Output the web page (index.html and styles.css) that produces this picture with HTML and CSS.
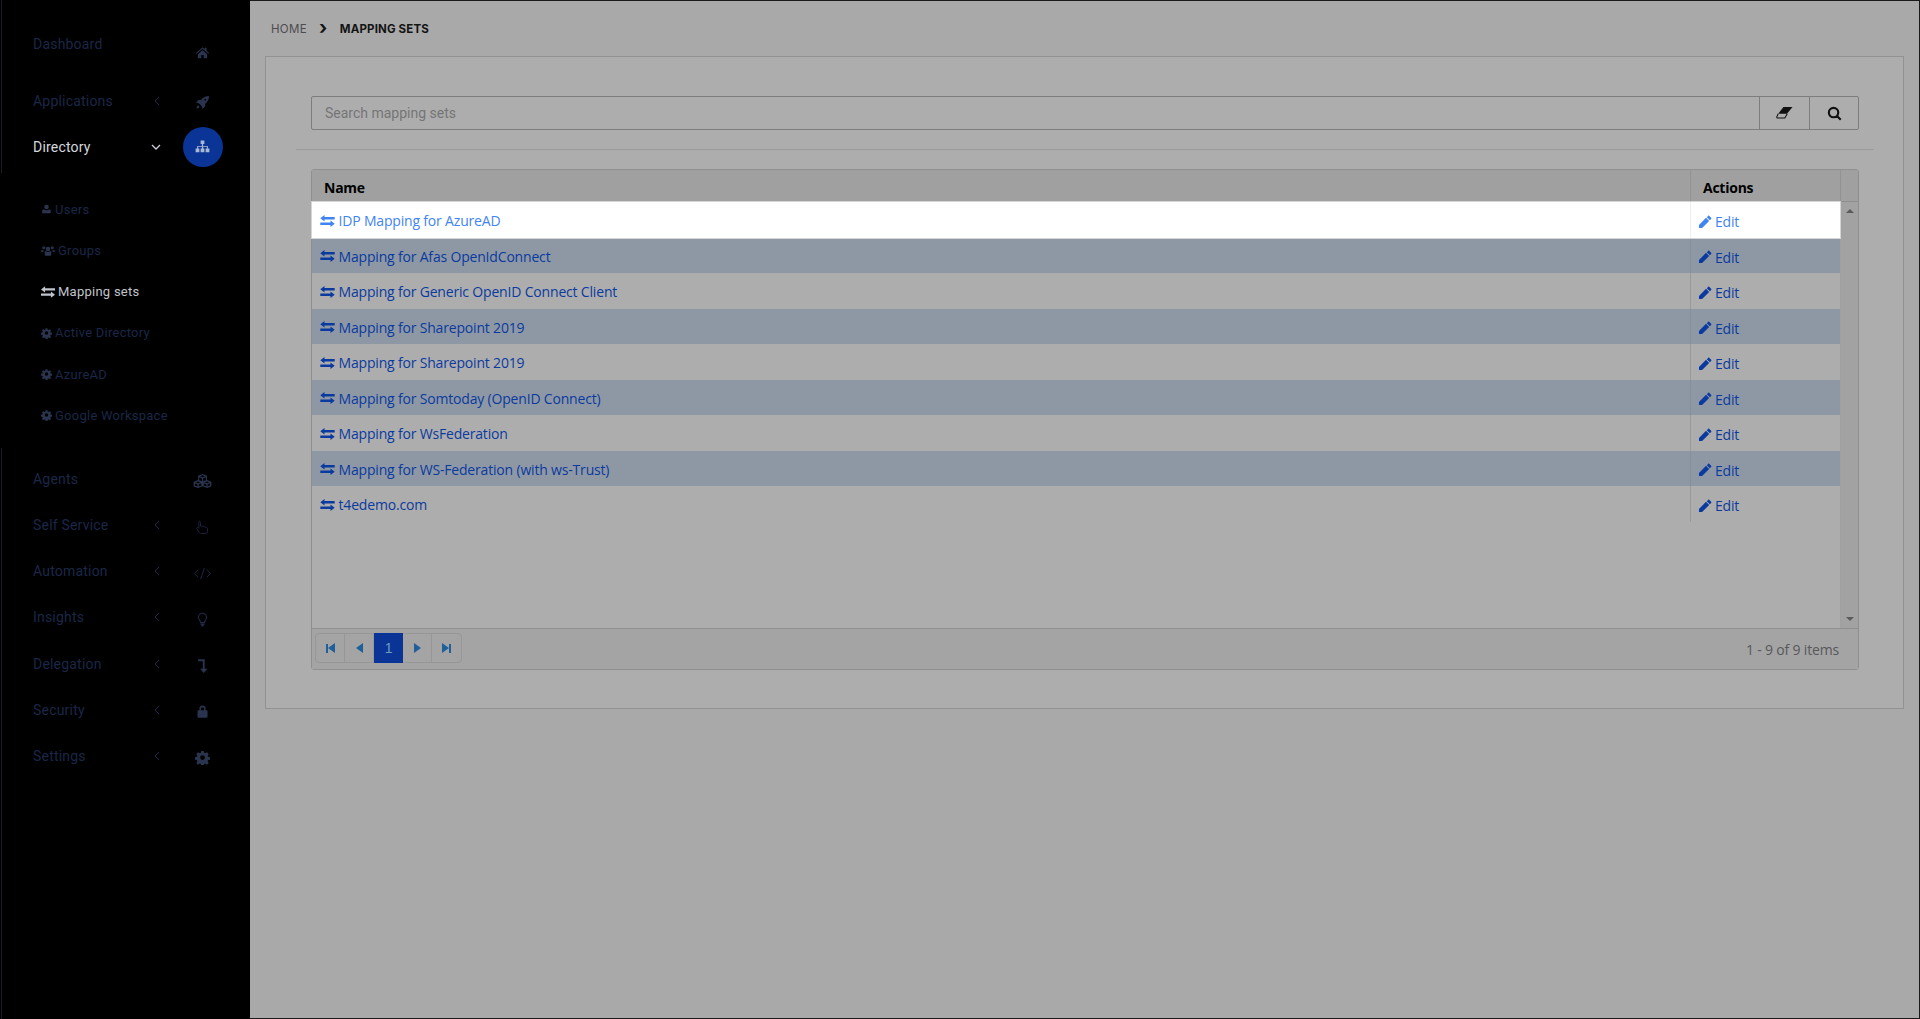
FILE: index.html
```html
<!DOCTYPE html>
<html lang="en">
<head>
<meta charset="utf-8">
<title>Mapping sets</title>
<link rel="stylesheet" href="styles.css">
</head>
<body>
<svg class="defs" aria-hidden="true">
  <symbol id="i-home" viewBox="0 0 24 24"><path d="M12 3.500 1.500 12.600l1.200 1.300L12 6l9.300 7.900 1.200-1.300-4-3.400V4.500h-3v2.200zM4.500 14.800V21H10v-5h4v5h5.500v-6.200L12 8.500z"/></symbol>
  <symbol id="i-rocket" viewBox="0 0 24 24"><path d="M22.500 1.500c-5.500.2-9.500 2.300-12.800 6.300H5.500L1.500 12l4.500 1 5 5 1 4.500 4.200-4v-4.200c4-3.300 6.100-7.300 6.300-12.800zM16.500 6a1.600 1.600 0 1 1 0 3.200 1.600 1.600 0 0 1 0-3.200zM5 16.500c-1.500 1-2.200 2.500-2.500 5 2.500-.3 4-1 5-2.500z"/></symbol>
  <symbol id="i-sitemap" viewBox="0 0 24 24"><path d="M9 2.500h6v5.500h-2v3h7.500v4H23v6h-6v-6h2v-2.500h-6v2.500h2v6H9v-6h2v-2.500H5v2.500h2v6H1v-6h2.500v-4H11V8H9z"/></symbol>
  <symbol id="i-user" viewBox="0 0 24 24"><path d="M12 2.500a5 5 0 1 1 0 10 5 5 0 0 1 0-10zM5.500 12.500c1.500 1.500 3.800 2.200 6.500 2.200s5-.7 6.500-2.200c2 .5 3 3 3 6.500 0 1.500-1 2.500-2.500 2.500H5C3.500 21.500 2.500 20.500 2.500 19c0-3.500 1-6 3-6.500z"/></symbol>
  <symbol id="i-users" viewBox="0 0 28 24"><circle cx="14" cy="8" r="4.500"/><circle cx="5.500" cy="5.500" r="3"/><circle cx="22.500" cy="5.500" r="3"/><path d="M7.500 14c0-1 1-2 2-2 1 1 2.500 1.800 4.500 1.800S17.500 13 18.500 12c1 0 2 1 2 2v5.500c0 1-1 2-2 2h-9c-1 0-2-1-2-2zM1 9.500c1 .8 2.500 1.300 4.500 1.300-.6 1-.8 2-.8 3.200H2.500C1.500 14 .5 13.500.5 12.500zM27 9.500c-1 .8-2.500 1.300-4.500 1.300.6 1 .8 2 .8 3.200h2.200c1 0 2-.5 2-1.500z"/></symbol>
  <symbol id="i-exchange" viewBox="0 0 24 20"><path d="M0 12.500h17V9l7 5.500-7 5.500v-3.500H0zM24 3.500v4H7V11L0 5.500 7 0v3.500z"/></symbol>
  <symbol id="i-gear" viewBox="0 0 24 24"><path fill-rule="evenodd" d="M10 1.500h4l.6 3 1.900.8 2.600-1.700 2.800 2.800-1.700 2.600.8 1.900 3 .6v4l-3 .6-.8 1.900 1.700 2.600-2.800 2.800-2.600-1.700-1.900.8-.6 3h-4l-.6-3-1.900-.8-2.600 1.700-2.800-2.800 1.700-2.600-.8-1.900-3-.6v-4l3-.6.8-1.900-1.700-2.600 2.800-2.800 2.600 1.700 1.900-.8zM12 8.200a3.800 3.800 0 1 0 0 7.600 3.800 3.800 0 0 0 0-7.600z"/></symbol>
  <symbol id="i-cubes" viewBox="0 0 30 24"><path fill-rule="evenodd" d="M15 1l7 2.600v7L29 13.200v7.300L22 23l-7-2.600L8 23l-7-2.500v-7.300l7-2.600v-7zM15 3l-4 1.400 4 1.500 4-1.500zM9.800 6v4.700l4.200 1.600V7.600zM16 7.600v4.700l4.200-1.600V6zM8 12.600l-4 1.500 4 1.500 4-1.500zM22 12.600l-4 1.500 4 1.500 4-1.500zM3 15.800v3.300l4 1.500v-3.300zM9 17.300v3.300l4-1.500v-3.300zM17 15.800v3.300l4 1.500v-3.300zM23 17.300v3.300l4-1.500v-3.300z"/></symbol>
  <symbol id="i-hand" viewBox="0 0 24 24"><path fill="none" stroke="currentColor" stroke-width="1.300" d="M7 2c1 0 1.700.8 1.700 1.800v6.200c.8-.8 2.600-.6 3 .4.900-.7 2.500-.4 2.900.6 1-.5 2.400 0 2.700 1 1-.4 2.700.3 2.700 2V18c0 2-1 3.500-2 3.500h-9c-1 0-2-1-3-2.500l-3-5c-.7-1.200 1-2.800 2.300-1.700l.9.900V3.800C5.200 2.800 6 2 7 2z"/></symbol>
  <symbol id="i-code" viewBox="0 0 30 24"><path fill="none" stroke="currentColor" stroke-width="1.500" d="M8 6 2 12l6 6M22 6l6 6-6 6M18 3l-6 18"/></symbol>
  <symbol id="i-bulb" viewBox="0 0 24 24"><path fill="none" stroke="currentColor" stroke-width="1.700" d="M12 2a6.500 6.500 0 0 0-6.500 6.500c0 3.500 3 5 3.500 8.500h6c.5-3.500 3.500-5 3.500-8.500A6.500 6.500 0 0 0 12 2z"/><path d="M9 18.500h6v2l-2 2.500h-2l-2-2.500z"/></symbol>
  <symbol id="i-level" viewBox="0 0 24 24"><path d="M5 2h10.500v15H20l-6 7-6-7h4.500V5H5z"/></symbol>
  <symbol id="i-lock" viewBox="0 0 24 24"><path fill-rule="evenodd" d="M7 10V7.500a5 5 0 0 1 10 0V10h1.500c.8 0 1.500.7 1.500 1.500v9c0 .8-.7 1.500-1.500 1.500h-13C4.700 22 4 21.300 4 20.500v-9c0-.8.7-1.500 1.500-1.500zM9.500 10h5V7.500a2.500 2.500 0 0 0-5 0z"/></symbol>
  <symbol id="i-pencil" viewBox="0 0 24 24"><path d="M19.500 1.500l3 3c.7.7.7 1.500 0 2.200L20.300 9 15 3.700l2.300-2.200c.7-.7 1.500-.7 2.200 0zM13.800 4.900l5.300 5.300L7 22.300H1.700V17z"/></symbol>
  <symbol id="i-eraser" viewBox="0 0 24 20"><path d="M10.500 1.500H23.500l-8 9.500H3z"/><path fill="none" stroke="currentColor" stroke-width="1.500" d="M3 11 1 15.500c-.3.800 0 1.500.8 1.500h10.700l3.500-6"/></symbol>
  <symbol id="i-search" viewBox="0 0 24 24"><path fill="none" stroke="currentColor" stroke-width="3.400" d="M10.500 3a7.500 7.500 0 1 0 0 15 7.500 7.500 0 0 0 0-15zM16 16l6 6"/></symbol>
  <symbol id="i-caret" viewBox="0 0 6 10"><path fill="none" stroke="currentColor" stroke-width="1" d="M5 1 1 5l4 4"/></symbol>
</svg>

<div class="app">
  <nav class="sidebar">
    <div class="nav-group nav-upper">
      <a class="nav-item nav-first"><span class="nav-label">Dashboard</span><span class="nav-icon"><svg class="ic-15"><use href="#i-home"/></svg></span></a>
      <a class="nav-item nav-second"><span class="nav-label">Applications</span><svg class="nav-caret"><use href="#i-caret"/></svg><span class="nav-icon"><svg class="ic-15"><use href="#i-rocket"/></svg></span></a>
      <a class="nav-item is-active"><span class="nav-label">Directory</span><svg class="nav-chev" viewBox="0 0 10 6"><path d="M1 1l4 4 4-4"/></svg><span class="nav-icon"><svg class="ic-15"><use href="#i-sitemap"/></svg></span></a>
    </div>
    <div class="nav-sub">
      <a class="sub-item"><svg class="ic-sub"><use href="#i-user"/></svg>Users</a>
      <a class="sub-item"><svg class="ic-sub ic-wide"><use href="#i-users"/></svg>Groups</a>
      <a class="sub-item is-current"><svg class="ic-sub ic-wide"><use href="#i-exchange"/></svg>Mapping sets</a>
      <a class="sub-item"><svg class="ic-sub"><use href="#i-gear"/></svg>Active Directory</a>
      <a class="sub-item"><svg class="ic-sub"><use href="#i-gear"/></svg>AzureAD</a>
      <a class="sub-item"><svg class="ic-sub"><use href="#i-gear"/></svg>Google Workspace</a>
    </div>
    <div class="nav-group nav-lower">
      <a class="nav-item"><span class="nav-label">Agents</span><span class="nav-icon"><svg class="ic-18"><use href="#i-cubes"/></svg></span></a>
      <a class="nav-item"><span class="nav-label">Self Service</span><svg class="nav-caret"><use href="#i-caret"/></svg><span class="nav-icon icon-dim"><svg class="ic-15"><use href="#i-hand"/></svg></span></a>
      <a class="nav-item"><span class="nav-label">Automation</span><svg class="nav-caret"><use href="#i-caret"/></svg><span class="nav-icon icon-dim"><svg class="ic-code"><use href="#i-code"/></svg></span></a>
      <a class="nav-item"><span class="nav-label">Insights</span><svg class="nav-caret"><use href="#i-caret"/></svg><span class="nav-icon icon-dim"><svg class="ic-15"><use href="#i-bulb"/></svg></span></a>
      <a class="nav-item"><span class="nav-label">Delegation</span><svg class="nav-caret"><use href="#i-caret"/></svg><span class="nav-icon"><svg class="ic-15"><use href="#i-level"/></svg></span></a>
      <a class="nav-item"><span class="nav-label">Security</span><svg class="nav-caret"><use href="#i-caret"/></svg><span class="nav-icon"><svg class="ic-15"><use href="#i-lock"/></svg></span></a>
      <a class="nav-item"><span class="nav-label">Settings</span><svg class="nav-caret"><use href="#i-caret"/></svg><span class="nav-icon"><svg class="ic-15"><use href="#i-gear"/></svg></span></a>
    </div>
  </nav>

  <main class="main">
    <div class="crumbs"><span class="crumb">HOME</span><span class="crumb-sep">&#x203A;</span><span class="crumb crumb-now">MAPPING SETS</span></div>
    <section class="card">
      <div class="search">
        <div class="search-input">Search mapping sets</div>
        <button class="search-btn btn-clear"><svg class="ic-eraser"><use href="#i-eraser"/></svg></button>
        <button class="search-btn btn-go"><svg class="ic-search"><use href="#i-search"/></svg></button>
      </div>
      <hr class="rule">
      <div class="grid">
        <div class="grid-head">
          <div class="col-name">Name</div>
          <div class="col-actions">Actions</div>
          <div class="col-scroll"></div>
        </div>
        <div class="grid-body">
          <div class="rows">
            <div class="row is-hover"><a class="cell-name"><svg class="ic-ex"><use href="#i-exchange"/></svg>IDP Mapping for AzureAD</a><a class="cell-act"><svg class="ic-pen"><use href="#i-pencil"/></svg>Edit</a></div>
            <div class="row is-alt"><a class="cell-name"><svg class="ic-ex"><use href="#i-exchange"/></svg>Mapping for Afas OpenIdConnect</a><a class="cell-act"><svg class="ic-pen"><use href="#i-pencil"/></svg>Edit</a></div>
            <div class="row"><a class="cell-name"><svg class="ic-ex"><use href="#i-exchange"/></svg>Mapping for Generic OpenID Connect Client</a><a class="cell-act"><svg class="ic-pen"><use href="#i-pencil"/></svg>Edit</a></div>
            <div class="row is-alt"><a class="cell-name"><svg class="ic-ex"><use href="#i-exchange"/></svg>Mapping for Sharepoint 2019</a><a class="cell-act"><svg class="ic-pen"><use href="#i-pencil"/></svg>Edit</a></div>
            <div class="row"><a class="cell-name"><svg class="ic-ex"><use href="#i-exchange"/></svg>Mapping for Sharepoint 2019</a><a class="cell-act"><svg class="ic-pen"><use href="#i-pencil"/></svg>Edit</a></div>
            <div class="row is-alt"><a class="cell-name"><svg class="ic-ex"><use href="#i-exchange"/></svg>Mapping for Somtoday (OpenID Connect)</a><a class="cell-act"><svg class="ic-pen"><use href="#i-pencil"/></svg>Edit</a></div>
            <div class="row"><a class="cell-name"><svg class="ic-ex"><use href="#i-exchange"/></svg>Mapping for WsFederation</a><a class="cell-act"><svg class="ic-pen"><use href="#i-pencil"/></svg>Edit</a></div>
            <div class="row is-alt"><a class="cell-name"><svg class="ic-ex"><use href="#i-exchange"/></svg>Mapping for WS-Federation (with ws-Trust)</a><a class="cell-act"><svg class="ic-pen"><use href="#i-pencil"/></svg>Edit</a></div>
            <div class="row"><a class="cell-name"><svg class="ic-ex"><use href="#i-exchange"/></svg>t4edemo.com</a><a class="cell-act"><svg class="ic-pen"><use href="#i-pencil"/></svg>Edit</a></div>
          </div>
          <div class="scrollbar"><span class="tri tri-up"></span><span class="tri tri-down"></span></div>
        </div>
        <div class="grid-foot">
          <div class="pager">
            <span class="pg"><span class="bar"></span><span class="tri-l"></span></span>
            <span class="pg"><span class="tri-l"></span></span>
            <span class="pg pg-on">1</span>
            <span class="pg"><span class="tri-r"></span></span>
            <span class="pg pg-last"><span class="tri-r"></span><span class="bar"></span></span>
          </div>
          <div class="pg-info">1 - 9 of 9 items</div>
        </div>
      </div>
    </section>
  </main>
</div>
</body>
</html>
```
FILE: styles.css
```css
* { box-sizing: border-box; }
html, body { margin: 0; height: 100%; }
body { background: #000; font-family: "Open Sans", "Liberation Sans", sans-serif; overflow: hidden; }
.defs { display: none; }
svg { fill: currentColor; flex: none; }
.app { display: flex; height: 1019px; }

/* sidebar */
.sidebar { width: 250px; flex: none; background: #000; font-family: Roboto, "Liberation Sans", sans-serif; color: #1a2747; }
.nav-group { margin-left: 1px; border-left: 1px solid #1b1d24; padding-left: 31px; }
.nav-upper { padding-bottom: 3px; }
.nav-item { display: flex; align-items: center; height: 46.2px; font-size: 14px; letter-spacing: .2px; position: relative; }
.nav-first { align-items: flex-start; padding-top: 36px; height: 78.4px; }
.nav-second { height: 45.2px; }
.nav-label { width: 121px; }
.nav-caret { width: 6px; height: 10px; color: #1d2a4a; }
.nav-chev { width: 10px; height: 6px; fill: none; stroke: #c9cdd6; stroke-width: 1.3; margin: 0 10px 0 -3px; }
.nav-icon { position: absolute; left: 149.5px; top: 50%; width: 40px; height: 40px; margin-top: -18px; display: flex; align-items: center; justify-content: center; color: #2a344e; border-radius: 50%; }
.icon-dim { color: #20294a; }
.nav-first .nav-icon { top: 52px; margin-top: -20px; }
.is-active { color: #d5d8dd; }
.is-active .nav-icon { background: #0a3597; color: #aab8d4; margin-top: -20px; }
.ic-15 { width: 15px; height: 15px; }
.ic-18 { width: 19px; height: 16px; }
.ic-code { width: 19px; height: 15px; }

.nav-sub { padding: 16px 0 0 41px; height: 275px; }
.sub-item { display: flex; align-items: center; height: 41.2px; font-size: 13px; letter-spacing: .25px; color: #1a2747; white-space: nowrap; }
.ic-sub { width: 11px; height: 12px; margin-right: 3px; color: #2a344e; }
.ic-wide { width: 14px; }
.is-current { color: #c0c4cc; }
.is-current .ic-sub { color: #c0c4cc; }
.nav-lower { min-height: 571px; padding-top: 8px; }

/* main */
.main { flex: 1; min-width: 0; background: #a9a9aa; border: 1px solid #1a1a1a; border-left: 0; padding: 0 15px; }
.crumbs { display: flex; align-items: center; height: 55px; padding-left: 6px; font-family: Inter, "Liberation Sans", sans-serif; font-size: 11.5px; letter-spacing: .3px; color: #4c4c4d; }
.crumb-sep { font-size: 19px; font-weight: 700; color: #141414; width: 33px; text-align: center; line-height: 1; margin-top: -3px; }
.crumb-now { font-weight: 700; color: #141414; letter-spacing: .15px; }
.card { background: #adadad; border: 1px solid #929293; height: 653px; padding: 39px 44px 0 45px; }
.search { display: flex; height: 34px; border: 1px solid #7d7d7e; border-radius: 2px; }
.search-input { flex: 1; padding: 0 13px 1px; display: flex; align-items: center; font-family: Roboto, "Liberation Sans", sans-serif; font-size: 14px; color: #757576; }
.search-btn { background: none; border: 0; border-left: 1px solid #7d7d7e; padding: 0; display: flex; align-items: center; justify-content: center; color: #111; }
.btn-clear { width: 50px; }
.btn-go { width: 49px; }
.ic-eraser { width: 17px; height: 14px; }
.ic-search { width: 15px; height: 15px; }
.rule { border: 0; border-top: 1px solid #9c9c9d; margin: 19px -15px; }

.grid { border: 1px solid #8f8f90; border-radius: 3px; height: 501px; display: flex; flex-direction: column; font-size: 14px; letter-spacing: -.18px; }
.grid-head { display: flex; height: 32px; background: #a0a0a1; border-bottom: 1px solid #8f8f90; font-weight: 700; color: #000; flex: none; font-size: 14px; line-height: 35px; letter-spacing: -.25px; }
.col-name { flex: 1; padding-left: 12px; }
.col-actions { width: 150px; border-left: 1px solid #939394; padding-left: 12px; }
.col-scroll { width: 18px; border-left: 1px solid #939394; flex: none; }
.grid-body { flex: 1; display: flex; min-height: 0; }
.rows { flex: 1; min-width: 0; }
.row { display: flex; height: 35.5px; align-items: center; color: #0a3a9f; }
.is-alt { background: #8e98a4; }
.is-hover { background: #fff; color: #3f84f2; box-shadow: 0 0 0 1px #d5d5d5; position: relative; }
.cell-name { flex: 1; display: flex; align-items: center; padding: 2px 0 0 8px; }
.cell-act { width: 150px; height: 100%; border-left: 1px solid #9a9a9b; display: flex; align-items: center; padding: 4px 0 0 7px; }
.is-hover .cell-act { border-left-color: #eee; }
.is-alt .cell-act { border-left-color: #858e99; }
.ic-ex { width: 15px; height: 12px; margin-right: 3.5px; }
.ic-pen { width: 14px; height: 14px; margin-right: 3px; }
.scrollbar { width: 18px; flex: none; background: #a2a2a3; display: flex; flex-direction: column; justify-content: space-between; align-items: center; padding: 7px 0 7px; border-left: 1px solid #a0a0a1; }
.tri { width: 0; height: 0; border-left: 4px solid transparent; border-right: 4px solid transparent; }
.tri-up { border-bottom: 4px solid #5b5b5c; }
.tri-down { border-top: 4px solid #5b5b5c; }

.grid-foot { flex: none; height: 41px; background: #a4a4a5; border-top: 1px solid #8f8f90; display: flex; align-items: center; justify-content: space-between; padding: 0 19px 0 3px; }
.pager { display: flex; height: 30px; border: 1px solid #979798; border-radius: 4px; align-items: stretch; margin-top: -2px; }
.pg { width: 29px; display: flex; align-items: center; justify-content: center; border-right: 1px solid #979798; color: #1f5f9a; }
.pg-on { background: #0a3597; color: #6f9bc4; border-right: 0; font-family: "Liberation Sans", sans-serif; font-size: 14px; margin: -1px 0; }
.pg-last { border-right: 0; }
.tri-l { width: 0; height: 0; border-top: 5px solid transparent; border-bottom: 5px solid transparent; border-right: 7px solid #1f5f9a; }
.tri-r { width: 0; height: 0; border-top: 5px solid transparent; border-bottom: 5px solid transparent; border-left: 7px solid #1f5f9a; }
.bar { width: 2px; height: 9px; background: #1f5f9a; }
.pg-info { color: #585859; font-size: 14px; }
```
